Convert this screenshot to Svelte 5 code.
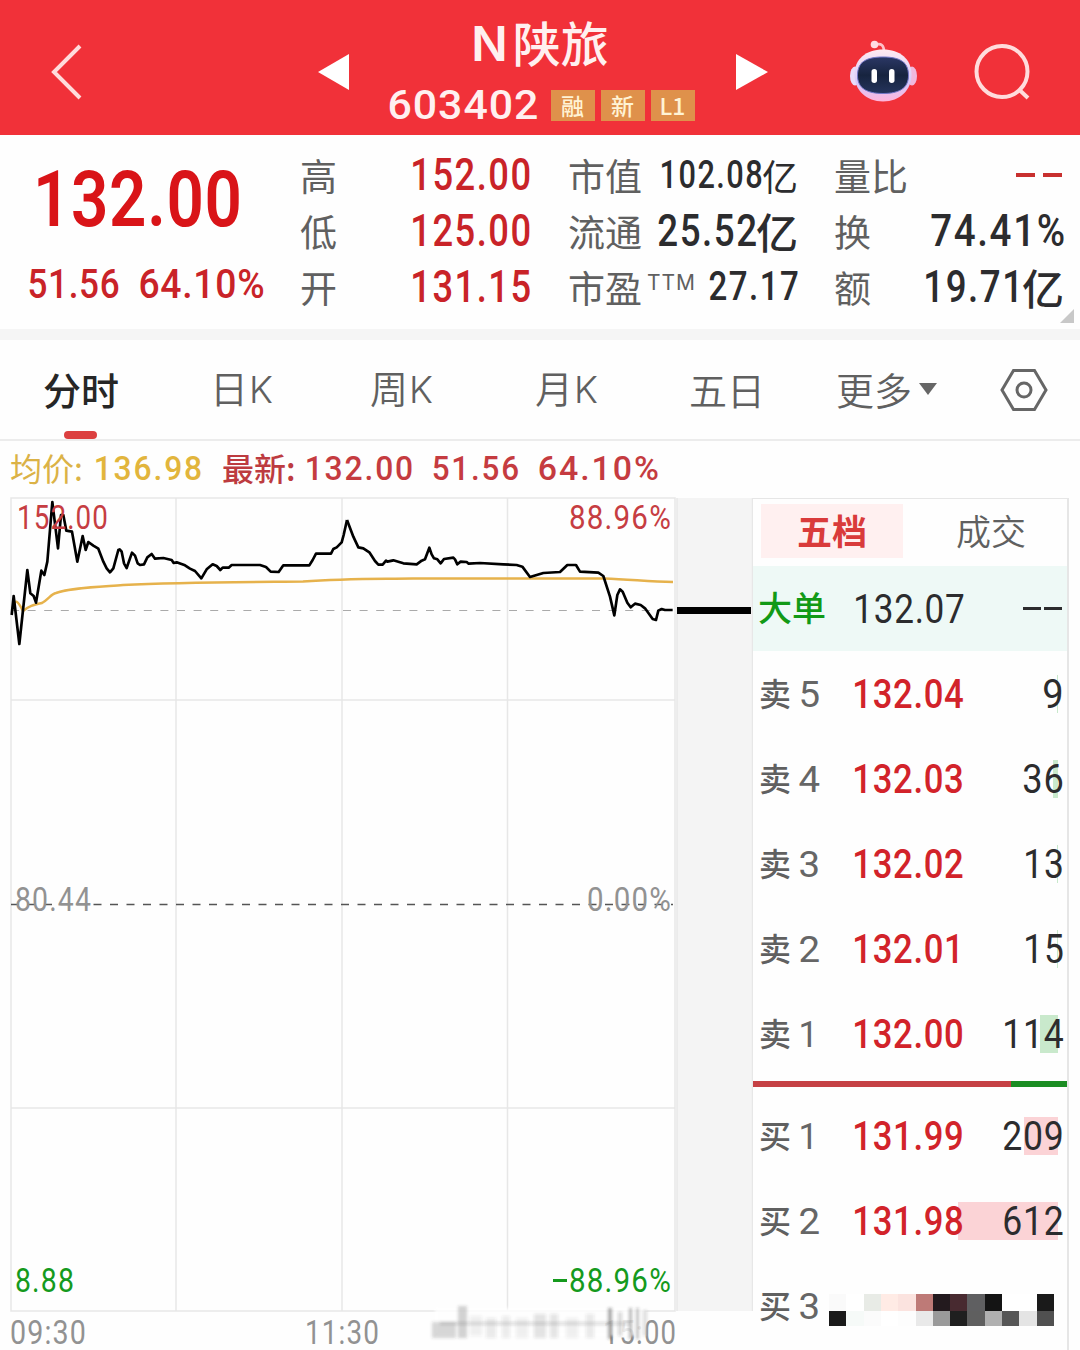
<script>
  const stats = [
    [
      { label: '高', value: '152.00', w: 118, fs: 44, tone: 'red' },
      { label: '低', value: '125.00', w: 118, fs: 44, tone: 'red' },
      { label: '开', value: '131.15', w: 118, fs: 44, tone: 'red' }
    ],
    [
      { label: '市值', value: '102.08', w: 101, fs: 38, tone: 'dark', unit: 'small' },
      { label: '流通', value: '25.52', w: 97, fs: 44, tone: 'dark', unit: 'large' },
      { label: '市盈', note: 'TTM', value: '27.17', w: 88, fs: 40, tone: 'dark' }
    ],
    [
      { label: '量比', dashes: true },
      { label: '换', value: '74.41%', w: 132, fs: 44, tone: 'dark' },
      { label: '额', value: '19.71', w: 97, fs: 44, tone: 'dark', unit: 'large' }
    ]
  ];

  const asks = [
    { side: '卖', n: '5', price: '132.04', vol: '9', vw: 18, bar: 1 },
    { side: '卖', n: '4', price: '132.03', vol: '36', vw: 38, bar: 5 },
    { side: '卖', n: '3', price: '132.02', vol: '13', vw: 37, bar: 1 },
    { side: '卖', n: '2', price: '132.01', vol: '15', vw: 37, bar: 1 },
    { side: '卖', n: '1', price: '132.00', vol: '114', vw: 58, bar: 18 }
  ];
  const bids = [
    { side: '买', n: '1', price: '131.99', vol: '209', vw: 58, bar: 34 },
    { side: '买', n: '2', price: '131.98', vol: '612', vw: 58, bar: 100 }
  ];

  const masked = [
    '#fafafa', '#fff', '#e8ebe6', '#ffebe5', '#fbe3df', '#be7a77', '#231a1e', '#482a30', '#5f5f61', '#141414', '#fff', '#fff', '#1a1a1a',
    '#1a1a1a', '#f6faf8', '#fbfbfb', '#fff', '#fdfdfd', '#e9e9e9', '#9a9a9a', '#1f1f1f', '#5f5f5f', '#b0b0b0', '#565656', '#e4e4e4', '#505050'
  ];

  const morning =
    '35,375 41,318 58,462 82,240 91,310 101,318 108,338 124,242 133,255 142,215 157,36 174,175 183,75 190,75 199,122 216,125 232,215 248,138 257,180 265,156 280,167 295,176 310,215 320,235 330,247 340,235 355,180 359,178 365,185 372,220 380,234 396,188 405,197 413,220 420,225 432,223 442,202 455,192 465,206 490,204 515,210 521,219 530,217 555,226 570,236 585,243 604,265 620,238 638,223 650,228 661,240 668,233 686,233 695,225 780,225 798,231 812,245 836,246 850,226 928,226 938,210 948,191 993,191 1000,177 1010,172 1025,157 1031,135 1041,90';
  const afternoon =
    '51,90 70,140 85,172 100,175 118,187 135,213 145,224 158,224 168,212 172,215 190,211 220,220 260,223 275,212 285,208 298,173 305,193 312,205 322,208 332,220 342,207 370,203 375,208 382,223 392,215 410,216 416,221 450,219 520,223 560,225 577,230 600,261 610,258 640,249 690,246 712,225 738,225 750,245 805,248 820,258 840,320 853,376 862,315 870,298 878,305 892,338 902,352 915,341 932,345 945,355 968,387 978,390 985,362 995,357 1005,360 1028,360';

  const watermark = [
    [432, 1322, 24, 16, 0.2], [458, 1306, 9, 32, 0.22], [470, 1316, 12, 20, 0.08],
    [486, 1318, 10, 20, 0.1], [502, 1316, 8, 22, 0.09], [516, 1318, 12, 20, 0.08],
    [534, 1314, 12, 24, 0.13], [550, 1314, 8, 24, 0.12], [566, 1318, 12, 20, 0.08],
    [586, 1314, 8, 24, 0.1], [608, 1308, 4, 31, 0.4], [618, 1312, 4, 24, 0.18],
    [629, 1308, 3, 31, 0.35], [636, 1308, 3, 31, 0.28], [643, 1310, 4, 26, 0.16], [440, 1322, 190, 3, 0.16]
  ];
</script>

<!-- Numerals condensed to a given width; the box height equals the digit height. -->
{#snippet num(text, w, fs, tone)}
  <svg class="num {tone}" width={w} height={fs * 0.711}>
    <text x={-fs * 0.04} y={fs * 0.711} font-size={fs} textLength={w + fs * 0.1} lengthAdjust="spacingAndGlyphs">{text}</text>
  </svg>
{/snippet}

{#snippet order(row, kind)}
  <div class="order">
    <span class="side">{row.side}</span>
    <span class="level">{@render num(row.n, row.n === '1' ? 16 : 18, 36, 'gray')}</span>
    <span class="price">{@render num(row.price, 108, 41, 'bright')}</span>
    <i class="depth {kind}" style:width="{row.bar}px"></i>
    <span class="vol">{@render num(row.vol, row.vw, 41, 'dark thin')}</span>
  </div>
{/snippet}

<main>
  <header>
    <svg class="back" width="36" height="60" viewBox="0 0 36 60"><path d="M32 4 6 30l26 26" /></svg>
    <svg class="prev" width="32" height="36" viewBox="0 0 32 36"><path d="M0 18 31 0v36z" /></svg>
    <div class="title">
      <div class="name"><span class="latin">N</span>陕旅</div>
      <div class="code">
        {@render num('603402', 148, 41, 'wide-set white')}
        <div class="badges"><b>融</b><b>新</b><b>L1</b></div>
      </div>
    </div>
    <svg class="next" width="32" height="36" viewBox="0 0 32 36"><path d="M32 18 0 0v36z" /></svg>
    <svg class="robot" width="68" height="64" viewBox="849 40 68 64">
      <defs>
        <linearGradient id="shell" x1="0" y1="0" x2="0" y2="1">
          <stop offset="0" stop-color="#ffeaf1" /><stop offset=".65" stop-color="#d6c9fb" /><stop offset="1" stop-color="#ffb5dc" />
        </linearGradient>
        <linearGradient id="visor" x1="0" y1="0" x2="0" y2="1">
          <stop offset="0" stop-color="#2b3765" /><stop offset=".5" stop-color="#17243f" /><stop offset="1" stop-color="#25345c" />
        </linearGradient>
      </defs>
      <path d="M876 44.500q8-2 8 7" fill="none" stroke="#ffc0c8" stroke-width="2.600" />
      <circle cx="874.500" cy="44.500" r="3.800" fill="#ffdbe2" />
      <ellipse cx="855" cy="76" rx="5" ry="9.500" fill="#e9dcfa" />
      <ellipse cx="912" cy="76" rx="5" ry="9.500" fill="#f0b9dd" />
      <path d="M883 49.500c17 0 28.500 9.500 28.500 25S900 101.500 883 101.500 854.500 90 854.500 74.500 866 49.500 883 49.500z" fill="url(#shell)" />
      <path d="M883 57c17 0 25.500 5 25.500 18.500 0 12.500-9 18-25.500 18s-25.500-5.500-25.500-18C857.500 62 866 57 883 57z" fill="url(#visor)" stroke="#7277c8" stroke-width="1" />
      <rect x="871.500" y="69" width="5.500" height="14" rx="2.700" fill="#fff" />
      <rect x="889" y="69" width="5.500" height="14" rx="2.700" fill="#fff" />
    </svg>
    <svg class="search" width="58" height="58" viewBox="973 43 58 58"><circle cx="1002" cy="71.500" r="25.500" /><path d="m1019.500 90 8.500 8" /></svg>
  </header>

  <section class="quote">
    <div class="last">
      <div class="big">{@render num('132.00', 202, 77, 'pure')}</div>
      <div class="change">{@render num('51.56', 89, 40, 'red')}{@render num('64.10%', 123, 40, 'red')}</div>
    </div>
    {#each stats as col, c}
      <dl class="col col{c}">
        {#each col as s}
          <div class="stat">
            <dt>{s.label}{#if s.note}<sup>{s.note}</sup>{/if}</dt>
            <dd>
              {#if s.dashes}<span class="dashes"><i></i><i></i></span>{:else}
                {@render num(s.value, s.w, s.fs, s.tone)}{#if s.unit}<span class="unit {s.unit}">亿</span>{/if}
              {/if}
            </dd>
          </div>
        {/each}
      </dl>
    {/each}
    <i class="corner"></i>
  </section>

  <nav>
    <span class="active">分时</span>
    <span>日<em>K</em></span>
    <span>周<em>K</em></span>
    <span>月<em>K</em></span>
    <span>五日</span>
    <span class="more">更多<i></i></span>
    <svg width="48" height="44" viewBox="0 0 48 44"><path d="M13.500 2.500h21L46 22 34.500 41.500h-21L2 22z" /><circle cx="24" cy="22" r="7" /></svg>
  </nav>

  <div class="legend">
    <span class="avg">均价:</span>{@render num('136.98', 107, 33, 'wide-set gold')}
    <span class="new">最新:</span>{@render num('132.00', 107, 33, 'wide-set rose')}
    <span class="gap"></span>{@render num('51.56', 86, 33, 'wide-set rose')}
    <span class="gap"></span>{@render num('64.10%', 120, 33, 'wide-set rose')}
  </div>

  <div class="body">
    <svg class="chart" width="753" height="858" viewBox="0 492 753 858">
      <rect x="677" y="498" width="75" height="813" fill="#f4f4f4" />
      <path class="grid" d="M11 498H675V1311H11zM176 498V1311M342 498V1311M507.500 498V1311M11 700H675M11 1108H675M677 498V1311M752.500 498V1311" />
      <path d="M11 610.500H673" stroke="#aaa" stroke-width="1.200" stroke-dasharray="8 8.600" />
      <path d="M11 904.500H673" stroke="#555" stroke-width="1.500" stroke-dasharray="8 8.500" />
      <path d="M12 610C15 597 18 601 23 611c6-5 10-6 19-8 7-4 9-9 14-10 13-5 40-6 67-8 60-3 130-3 180-3.500 40-3 60-2.500 110-3h191c28 1 44 3 69 3.500" fill="none" stroke="#e6b24c" stroke-width="2.500" />
      <g transform="translate(0 490) scale(.33333)"><polyline class="line" points={morning} /></g>
      <g transform="translate(330 490) scale(.33333)"><polyline class="line" points={afternoon} /></g>
      <rect x="677" y="607" width="74" height="7" fill="#000" />
      <g class="axis">
        <text class="up" x="17" y="528.500" textLength="92" lengthAdjust="spacingAndGlyphs">152.00</text>
        <text class="up" x="569" y="528.500" textLength="103" lengthAdjust="spacingAndGlyphs">88.96%</text>
        <text x="15" y="911" textLength="77" lengthAdjust="spacingAndGlyphs">80.44</text>
        <text x="587" y="911" textLength="85" lengthAdjust="spacingAndGlyphs">0.00%</text>
        <text class="down" x="15" y="1292" textLength="60" lengthAdjust="spacingAndGlyphs">8.88</text>
        <path d="M553 1280.500h14" stroke="#159a1d" stroke-width="3" />
        <text class="down" x="569" y="1292" textLength="103" lengthAdjust="spacingAndGlyphs">88.96%</text>
        <text x="10" y="1344" textLength="77" lengthAdjust="spacingAndGlyphs">09:30</text>
        <text x="305" y="1344" textLength="75" lengthAdjust="spacingAndGlyphs">11:30</text>
        <text x="603" y="1344" textLength="74" lengthAdjust="spacingAndGlyphs">15:00</text>
      </g>
      <filter id="soft"><feGaussianBlur stdDeviation="1.500" /></filter>
      <rect x="435" y="1308" width="211" height="28" fill="#fff" opacity=".82" filter="url(#soft)" />
      <g filter="url(#soft)">
        {#each watermark as [x, y, width, height, opacity]}
          <rect {x} {y} {width} {height} fill="#333" {opacity} />
        {/each}
      </g>
    </svg>

    <aside>
      <div class="tabs"><span class="on">五档</span><span>成交</span></div>
      <div class="order bulk">
        <span class="side wide">大单</span>
        <span class="price">{@render num('132.07', 108, 41, 'dark thin')}</span>
        <span class="dashes slim"><i></i><i></i></span>
      </div>
      {#each asks as row}{@render order(row, 'green')}{/each}
      <div class="ratio"><i></i></div>
      {#each bids as row}{@render order(row, 'pink')}{/each}
      <div class="order">
        <span class="side">买</span>
        <span class="level">{@render num('3', 18, 36, 'gray')}</span>
        <div class="mask">{#each masked as tone}<i style:background={tone}></i>{/each}</div>
      </div>
    </aside>
  </div>
</main>

<style>
  :global(body) { background: #fff; }
  main {
    width: 1080px; height: 1350px; overflow: hidden; background: #fefefe;
    display: flex; flex-direction: column;
    font-family: 'Noto Sans CJK SC', sans-serif; line-height: 1; color: #606060;
  }
  svg { display: block; flex: none; }
  i { display: block; }
  .num { overflow: visible; font-family: Roboto, sans-serif; font-weight: 500; fill: #c92328; letter-spacing: .05em; }
  .wide-set { letter-spacing: .06em; }
  .white { fill: #fff0f0; }
  .pure { fill: #d91418; font-weight: 600; }
  .bright { fill: #d2232a; }
  .dark { fill: #2c2c2e; }
  .thin { font-weight: 450; }
  .gray { fill: #666; font-weight: 450; letter-spacing: 0; }
  .gold { fill: #e2b53c; }
  .rose { fill: #c53b40; }

  header { height: 135px; flex: none; background: #f13139; display: flex; box-sizing: border-box; padding-left: 48px; color: #fff0f0; }
  .prev, .next { fill: #fff; }
  .back { margin-top: 42px; }
  .back path, .search path, .search circle { fill: none; stroke: #ffdcdc; stroke-width: 4; }
  .prev { margin: 54px 0 0 234px; }
  .title { width: 307px; margin-left: 39px; padding-top: 17px; display: flex; flex-direction: column; align-items: center; }
  .name { font-size: 48px; font-weight: 500; height: 73px; line-height: 48px; display: flex; gap: 5px; margin-right: 5px; }
  .latin { font-family: Inter, sans-serif; font-size: 48px; line-height: 53px; font-weight: 600; }
  .code { display: flex; align-items: flex-start; gap: 14px; }
  .code .num { margin-top: 0; }
  .badges { display: flex; gap: 6px; margin-right: 2px; }
  .badges b { width: 44px; height: 31px; background: #df914b; color: #fff3d5; font-size: 23px; font-weight: 500; line-height: 30px; text-align: center; }
  .next { margin: 54px 0 0 40px; }
  .robot { margin: 40px 0 0 81px; }
  .search { margin: 43px 0 0 56px; }

  .quote { height: 194px; flex: none; display: flex; position: relative; border-bottom: 11px solid #f5f5f5; }
  .last { width: 300px; box-sizing: border-box; padding: 36px 0 0 29px; }
  .big { padding-left: 7px; height: 99px; }
  .change { display: flex; gap: 22px; }
  .col { margin: 0; padding-top: 13px; }
  .col0 { width: 230px; }
  .col1 { width: 230px; margin-left: 38px; }
  .col2 { width: 230px; margin-left: 36px; }
  .stat { height: 56px; display: flex; justify-content: space-between; align-items: center; font-size: 37px; }
  dt { display: flex; white-space: nowrap; padding-bottom: 2px; }
  dd { margin: 0; display: flex; align-items: center; padding-bottom: 3px; }
  sup { font: 21px/21px Inter, sans-serif; letter-spacing: 1px; margin: 3px 0 0 5px; vertical-align: top; }
  .unit { color: #2c2c2e; font-weight: 500; }
  .small { font-size: 36px; font-weight: 400; }
  .large { font-size: 42px; }
  .dashes { display: flex; gap: 8px; padding-right: 2px; }
  .dashes i { width: 19px; height: 4px; background: #c8302f; }
  .corner { position: absolute; right: 6px; bottom: 6px; border: 7px solid transparent; border-right-color: #c8c8c8; border-bottom-color: #c8c8c8; }

  nav { height: 101px; flex: none; box-sizing: border-box; border-bottom: 2px solid #ececec; display: grid; grid-template-columns: 167px 160px 165px 154px 147px 164px 48px; align-items: center; padding-left: 43px; font-size: 38px; font-weight: 350; }
  nav span { padding-bottom: 2px; white-space: nowrap; }
  em { font: 300 37px/38px Inter, sans-serif; margin-left: 1px; }
  .active { font-weight: 500; color: #262626; font-size: 38px; position: relative; }
  .active::after { content: ''; position: absolute; left: 21px; top: 61px; width: 33px; height: 8px; border-radius: 4px; background: #dc4040; }
  .more { display: flex; align-items: center; gap: 7px; }
  .more i { border: 9px solid transparent; border-top: 12px solid #666; border-bottom: 0; }
  nav path, nav circle { fill: none; stroke: #666; stroke-width: 3; }

  .legend { height: 51px; flex: none; display: flex; align-items: center; padding: 5px 0 0 10px; box-sizing: border-box; font-size: 32px; }
  .avg { color: #dbb246; width: 85px; }
  .new { color: #bd3b40; font-weight: 500; width: 84px; margin-left: 20px; }
  .gap { width: 20px; }
  .legend span { height: 37px; white-space: nowrap; }

  .body { display: flex; flex: none; height: 858px; }
  .grid { fill: none; stroke: #e7e7e7; stroke-width: 1.5; }
  .line { fill: none; stroke: #000; stroke-width: 8; stroke-linejoin: round; }
  .axis { font: 450 34px Roboto, sans-serif; fill: #929292; letter-spacing: .04em; }
  .up { fill: #c63d42; }
  .down { fill: #159a1d; }

  aside { width: 314px; height: 852px; margin-top: 6px; border: solid #e6e6e6; border-width: 1px 2px 0 0; background: #fefefe; }
  .tabs { height: 67px; display: flex; box-sizing: border-box; padding: 5px 0 0 8px; font-size: 35px; font-weight: 350; }
  .tabs span { width: 142px; height: 54px; line-height: 51px; text-align: center; margin-right: 17px; white-space: nowrap; }
  .tabs span + span { width: 142px; margin-right: 0; }
  .tabs .on { background: #fff0f0; color: #d93b3b; font-weight: 700; }
  .order { height: 85px; position: relative; display: flex; align-items: center; padding: 0 5px 0 6px; }
  .side { width: 41px; font-size: 32px; padding-bottom: 3px; font-weight: 500; }
  .wide { width: 95px; font-size: 34px; color: #129a16; margin-left: -1px; padding-right: 2px; }
  .level { width: 54px; }
  .price { position: relative; z-index: 1; }
  .vol { margin-left: auto; position: relative; z-index: 1; }
  .depth { position: absolute; right: 9px; top: 24px; height: 38px; }
  .green { background: #c9e9cc; }
  .pink { background: #fbd3d6; }
  .bulk { background: #eef9f6; }
  .bulk .dashes { margin-left: auto; gap: 3px; padding: 0; }
  .slim i { width: 18px; height: 3px; background: #2c2c2e; }
  .ratio { height: 6px; margin: 5px 0 6px; background: #1b8d22; }
  .ratio i { width: 258px; height: 6px; background: #c54144; }
  .mask { width: 225px; display: grid; grid-template-columns: repeat(13, 1fr); grid-template-rows: 17px 15px; margin: 8px 0 0 -25px; flex: none; }
</style>
